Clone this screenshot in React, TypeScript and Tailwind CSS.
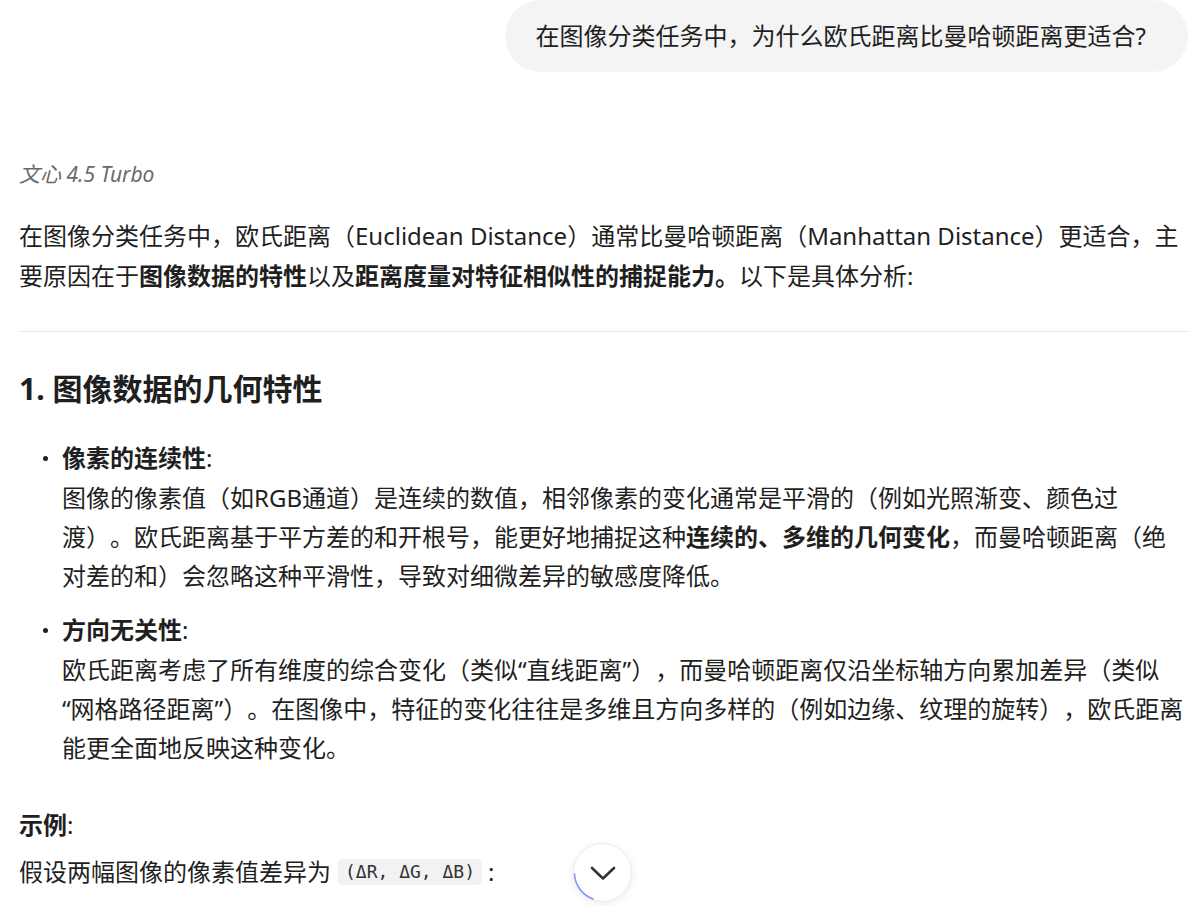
import React from "react";

const FONT = {
  fontFamily: '"Noto Sans", "Noto Sans CJK SC", sans-serif',
};

function Bullet({ label, children }: { label: string; children: React.ReactNode }) {
  return (
    <li className="flex">
      <span className="w-[43px] shrink-0 flex justify-end pr-[14px] pt-[18px]">
        <span className="block w-[5px] h-[5px] rounded-full bg-[#1f1f1f]" />
      </span>
      <div className="flex-1">
        <div>
          <b className="font-bold">{label}</b>:
        </div>
        <div className="leading-[39px]">{children}</div>
      </div>
    </li>
  );
}

export default function App() {
  return (
    <div
      className="relative w-[1202px] h-[906px] overflow-hidden bg-white text-[#1f1f1f] [text-spacing-trim:space-all]"
      style={FONT}
    >
      <div className="ml-[19px] w-[1169px] text-[24px] leading-[40px]">
        <div className="flex justify-end">
          <div className="h-[72px] rounded-[36px] bg-[#f4f4f4] pl-[31px] pr-[42px] flex items-center whitespace-nowrap">
            在图像分类任务中，为什么欧氏距离比曼哈顿距离更适合?
          </div>
        </div>

        <div className="mt-[89px] text-[21px] leading-[26px] italic text-[#6a6a6a]">
          文心 4.5 Turbo
        </div>

        <p className="mt-[29px]">
          在图像分类任务中，欧氏距离（Euclidean Distance）通常比曼哈顿距离（Manhattan Distance）更适合，主要原因在于
          <b className="font-bold">图像数据的特性</b>以及
          <b className="font-bold">距离度量对特征相似性的捕捉能力。</b>以下是具体分析:
        </p>

        <hr className="mt-[35px] border-0 h-px bg-[#e6e6e6]" />

        <h2 className="mt-[37px] text-[30px] leading-[40px] font-bold">1. 图像数据的几何特性</h2>

        <ul className="mt-[29px] flex flex-col gap-[15px]">
          <Bullet label="像素的连续性">
            图像的像素值（如RGB通道）是连续的数值，相邻像素的变化通常是平滑的（例如光照渐变、颜色过渡）。欧氏距离基于平方差的和开根号，能更好地捕捉这种
            <b className="font-bold">连续的、多维的几何变化</b>，而曼哈顿距离（绝对差的和）会忽略这种平滑性，导致对细微差异的敏感度降低。
          </Bullet>
          <Bullet label="方向无关性">
            {"欧氏距离考虑了所有维度的综合变化（类似\u200B“直线距离”），而曼哈顿距离仅沿坐标轴方向累加差异（类似\u200B“网格路径距离”）。在图像中，特征的变化往往是多维且方向多样的（例如边缘、纹理的旋转），欧氏距离能更全面地反映这种变化。"}
          </Bullet>
        </ul>

        <div className="mt-[38px]">
          <b className="font-bold">示例</b>:
        </div>
        <div className="mt-[7px] flex items-center">
          <span>假设两幅图像的像素值差异为</span>
          <code
            className="ml-[7px] mr-[6px] px-[7px] rounded-[5px] bg-[#f2f2f2] text-[18px] leading-[26px] text-[#333]"
            style={{ fontFamily: '"DejaVu Sans Mono", "Liberation Mono", monospace' }}
          >
            (ΔR, ΔG, ΔB)
          </code>
          <span>:</span>
        </div>
      </div>

      <button className="absolute left-[573px] top-[843px] w-[59px] h-[59px] rounded-full bg-white border border-[#ececec] shadow-[0_2px_8px_rgba(0,0,0,0.08)] flex items-center justify-center">
        <svg className="absolute inset-[-1px]" width="59" height="59" viewBox="0 0 59 59">
          <path
            d="M 1.5 31 A 28 28 0 0 0 20 56"
            fill="none"
            stroke="#7d92f2"
            strokeWidth="1.5"
            strokeLinecap="round"
          />
        </svg>
        <svg width="26" height="16" viewBox="0 0 26 16">
          <polyline
            points="2,3 13,13.5 24,3"
            fill="none"
            stroke="#333"
            strokeWidth="2.6"
            strokeLinecap="round"
            strokeLinejoin="round"
          />
        </svg>
      </button>
    </div>
  );
}
